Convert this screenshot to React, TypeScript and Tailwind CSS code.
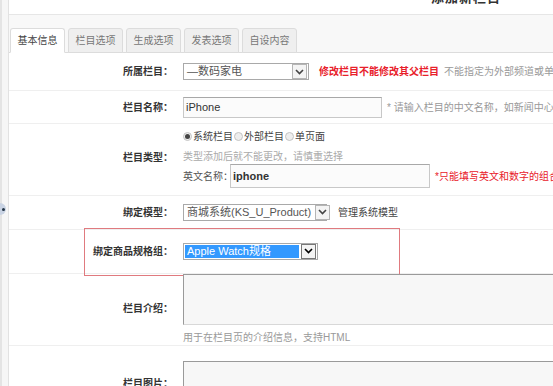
import React from "react";

const font = { fontFamily: '"Liberation Sans", "Noto Sans CJK SC", sans-serif' };

const Arrow = ({ dark }: { dark?: boolean }) => (
  <div
    className={`flex h-[15px] w-[15px] items-center justify-center border bg-[#f4f4f4] ${
      dark ? "border-[#777]" : "border-[#b5b5b5]"
    }`}
  >
    <svg width="9" height="6" viewBox="0 0 9 6">
      <path d="M1 1 L4.5 4.5 L8 1" fill="none" stroke={dark ? "#000" : "#444"} strokeWidth="1.6" />
    </svg>
  </div>
);

const Select = ({ text, width, selected }: { text: string; width: string; selected?: boolean }) => (
  <div className={`flex h-[17px] items-center border border-[#a9a9a9] bg-white pl-[1px] pr-[1px] ${width}`}>
    <div
      className={`flex h-[13px] flex-1 items-center whitespace-nowrap px-[2px] text-[11px] leading-none ${
        selected ? "bg-[#3399ff] text-white" : "text-[#555]"
      }`}
    >
      {text}
    </div>
    <div className="ml-[2px]">
      <Arrow dark={selected} />
    </div>
  </div>
);

const Row = ({
  label,
  className,
  labelClass,
  children,
}: {
  label: string;
  className: string;
  labelClass?: string;
  children?: React.ReactNode;
}) => (
  <div className={`relative flex border-b border-[#efefef] ${className}`}>
    <div className={`w-[164px] shrink-0 text-right text-[10px] font-bold text-[#333] ${labelClass ?? ""}`}>{label}</div>
    <div className="flex min-w-0 flex-1 pl-[10px]">{children}</div>
  </div>
);

const Radio = ({ on, label }: { on?: boolean; label: string }) => (
  <span className="flex items-center">
    <span className="mr-[1px] flex h-[9px] w-[9px] items-center justify-center rounded-full border border-[#c4c4c4] bg-[#eee]">
      {on && <span className="h-[5px] w-[5px] rounded-full bg-[#444]" />}
    </span>
    <span>{label}</span>
  </span>
);

export default function App() {
  return (
    <div className="flex h-[386px] w-[553px] overflow-hidden bg-white" style={font}>
      <div className="flex w-[9px] shrink-0 flex-col border-l-2 border-r border-l-[#e4e4e4] border-r-[#e2e2e2] bg-[#f6f6f6] pt-[203px]">
        <div className="flex h-[12px] w-[6px] -ml-[2px] items-center justify-center rounded-r-full bg-[#c9d3e3]">
          <span className="h-[3px] w-[3px] rounded-full bg-[#234]" />
        </div>
      </div>

      <div className="flex min-w-0 flex-1 flex-col">
        <div className="h-[15px] shrink-0 overflow-hidden border-b border-[#e6e6e6] bg-white">
          <div className="-mt-[12px] pl-[422px] text-[13px] font-bold tracking-[1px] text-[#333]">添加新栏目</div>
        </div>

        <div className="flex h-[38px] shrink-0 items-end gap-[3px] border-b border-[#dcdcdc] bg-[#f8f8f8] pl-[1px]">
          {["基本信息", "栏目选项", "生成选项", "发表选项", "自设内容"].map((t, i) => (
            <div
              key={t}
              className={`-mb-px flex h-[25px] w-[55px] items-center justify-center rounded-t-[3px] border border-[#dcdcdc] text-[10px] ${
                i === 0 ? "border-b-white bg-white text-[#444]" : "bg-[#efefef] text-[#777]"
              }`}
            >
              {t}
            </div>
          ))}
        </div>

        <Row label="所属栏目：" className="h-[39px] items-center">
          <div className="flex items-center">
            <Select text="—数码家电" width="w-[126px]" />
            <span className="ml-[10px] whitespace-nowrap text-[10px] font-bold text-[#e8202a]">修改栏目不能修改其父栏目</span>
            <span className="ml-[5px] whitespace-nowrap text-[10px] text-[#999]">不能指定为外部频道或单页面</span>
          </div>
        </Row>

        <Row label="栏目名称：" className="h-[33px] items-center">
          <div className="flex items-center">
            <div className="flex h-[21px] w-[199px] items-center border border-[#c8c8c8] border-t-[#a8a8a8] bg-[#fbfbfb] pl-[2px] text-[11px] text-[#333]">
              iPhone
            </div>
            <span className="ml-[5px] whitespace-nowrap text-[10px] text-[#999]">* 请输入栏目的中文名称，如新闻中心等</span>
          </div>
        </Row>

        <Row label="栏目类型：" className="h-[73px] items-start" labelClass="mt-[26px]">
          <div className="flex flex-col pt-[6px] text-[10px] text-[#444]">
            <div className="flex h-[12px] items-center gap-[1px]">
              <Radio on label="系统栏目" />
              <Radio label="外部栏目" />
              <Radio label="单页面" />
            </div>
            <div className="mt-[7px] h-[12px] whitespace-nowrap text-[#aaa]">类型添加后就不能更改，请慎重选择</div>
            <div className="mt-[3px] flex items-center">
              <span className="w-[47px] whitespace-nowrap text-[#555]">英文名称：</span>
              <div className="flex h-[24px] w-[200px] items-center border border-[#c8c8c8] border-t-[#a8a8a8] bg-[#fbfbfb] pl-[2px] text-[11px] font-bold text-[#333]">
                iphone
              </div>
              <span className="ml-[5px] whitespace-nowrap text-[#e8202a]">*只能填写英文和数字的组合</span>
            </div>
          </div>
        </Row>

        <Row label="绑定模型：" className="h-[34px] items-center">
          <div className="flex items-center">
            <Select text="商城系统(KS_U_Product)" width="w-[144px]" />
            <span className="ml-[11px] whitespace-nowrap text-[10px] text-[#444]">管理系统模型</span>
          </div>
        </Row>

        <Row label="绑定商品规格组：" className="h-[45px] items-center">
          <div className="flex items-center">
            <Select text="Apple Watch规格" width="w-[135px]" selected />
          </div>
          <div className="pointer-events-none absolute left-[75px] top-[-2px] h-[48px] w-[316px] border-[1.5px] border-[#e07a7f]" />
        </Row>

        <Row label="栏目介绍：" className="h-[73px] items-start" labelClass="mt-[27px]">
          <div className="flex flex-1 flex-col">
            <div className="h-[51px] border-l border-t border-[#9a9a9a] border-b border-b-[#d8d8d8] bg-[#f7f7f7]" />
            <div className="mt-[5px] whitespace-nowrap text-[10px] text-[#999]">用于在栏目页的介绍信息，支持HTML</div>
          </div>
        </Row>

        <Row label="栏目图片：" className="h-[40px] items-start border-b-0" labelClass="mt-[30px]">
          <div className="mt-[15px] h-[40px] flex-1 border-l border-t border-[#9a9a9a] bg-[#f7f7f7]" />
        </Row>
      </div>
    </div>
  );
}
